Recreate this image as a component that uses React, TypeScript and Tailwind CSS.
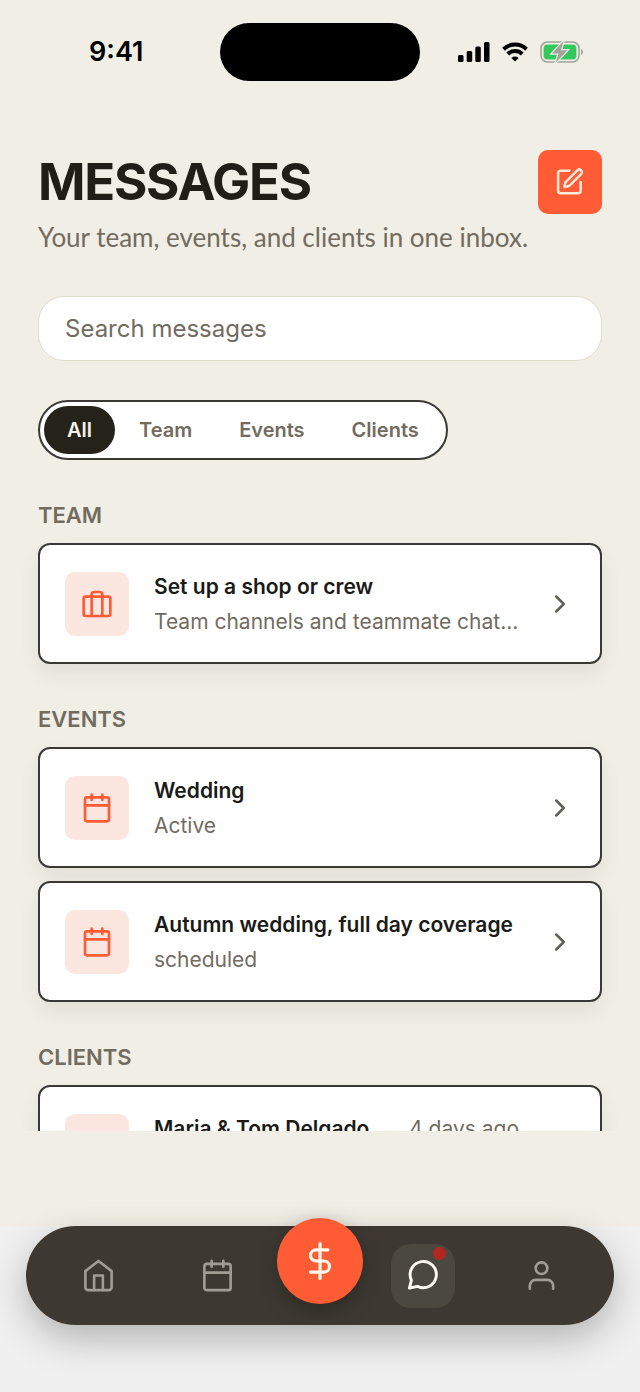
import type { ReactNode } from 'react'

type IconProps = { className?: string; children: ReactNode }

function Icon({ className, children }: IconProps) {
  return (
    <svg
      viewBox="0 0 24 24"
      fill="none"
      stroke="currentColor"
      strokeLinecap="round"
      strokeLinejoin="round"
      aria-hidden="true"
      className={className}
    >
      {children}
    </svg>
  )
}

function EditIcon() {
  return (
    <Icon className="size-[30px] stroke-2">
      <path d="M11.500 3H4.500a2 2 0 0 0-2 2v14a2 2 0 0 0 2 2h14a2 2 0 0 0 2-2v-7" />
      <path d="M17.875 2.625a1 1 0 0 1 3 3l-9.013 9.014a2 2 0 0 1-.853.505l-2.873.84a.5.5 0 0 1-.62-.62l.84-2.873a2 2 0 0 1 .506-.852z" />
    </Icon>
  )
}

function CalendarIcon({ className }: { className: string }) {
  return (
    <Icon className={className}>
      <rect x="3" y="4" width="18" height="18" rx="1.5" />
      <path d="M16 2v4M8 2v4M3 10h18" />
    </Icon>
  )
}

function BriefcaseIcon({ className }: { className: string }) {
  return (
    <Icon className={className}>
      <rect x="2" y="6.5" width="20" height="14.5" rx="1.5" />
      <path d="M16 21V5a2 2 0 0 0-2-2h-4a2 2 0 0 0-2 2v16" />
    </Icon>
  )
}

function UserIcon({ className }: { className: string }) {
  return (
    <Icon className={className}>
      <path d="M20 21v-2a4 4 0 0 0-4-4H8a4 4 0 0 0-4 4v2" />
      <circle cx="12" cy="7" r="4" />
    </Icon>
  )
}

function StatusBar() {
  return (
    <div className="grid h-[103px] shrink-0 grid-cols-[1fr_auto_1fr] items-center px-[38px]">
      <div className="pl-[51px] text-[27px] leading-8 font-semibold text-black">9:41</div>
      <div className="h-[58px] w-[200px] rounded-full bg-black" />
      <div className="flex items-center justify-end gap-3 pr-[18px]">
        <svg viewBox="0 0 32 20" className="h-5 w-8">
          <rect x="0" y="13" width="5.5" height="7" rx="1.5" />
          <rect x="8.7" y="9" width="5.5" height="11" rx="1.5" />
          <rect x="17.3" y="4.5" width="5.5" height="15.5" rx="1.5" />
          <rect x="26" y="0" width="5.5" height="20" rx="1.5" />
        </svg>
        <svg viewBox="0 0 26 20" className="h-5 w-[26px]" fill="none" stroke="black" strokeWidth="4">
          <path d="M1.5 7.2a16.5 16.5 0 0 1 23 0" />
          <path d="M5.8 12a10.4 10.4 0 0 1 14.4 0" />
          <path d="M13 19.6l-3.6-3.7a5.2 5.2 0 0 1 7.2 0z" fill="black" stroke="none" />
        </svg>
        <svg viewBox="0 0 44 24" className="h-6 w-11">
          <rect x="1" y="2" width="38" height="20" rx="6.5" fill="none" stroke="#a3a39b" strokeWidth="1.6" />
          <rect x="3.6" y="4.6" width="32.8" height="14.8" rx="4" fill="#34c759" />
          <path d="M41 9v6c1.2-.5 2-1.7 2-3s-.8-2.5-2-3z" fill="#a3a39b" />
          <path
            d="M23.5 1L12 13.5h6.5L15.5 23 27.5 10.3h-6.5z"
            fill="#a3a39b"
            stroke="#f1eee6"
            strokeWidth="2.4"
            paintOrder="stroke"
          />
        </svg>
      </div>
    </div>
  )
}

const tabs = ['All', 'Team', 'Events', 'Clients']

interface Thread {
  title: string
  detail: string
  time?: string
  icon: (props: { className: string }) => ReactNode
}

const sections: { name: string; threads: Thread[] }[] = [
  {
    name: 'Team',
    threads: [{ title: 'Set up a shop or crew', detail: 'Team channels and teammate chat...', icon: BriefcaseIcon }],
  },
  {
    name: 'Events',
    threads: [
      { title: 'Wedding', detail: 'Active', icon: CalendarIcon },
      { title: 'Autumn wedding, full day coverage', detail: 'scheduled', icon: CalendarIcon },
    ],
  },
  {
    name: 'Clients',
    threads: [{ title: 'Maria & Tom Delgado', detail: '', time: '4 days ago', icon: UserIcon }],
  },
]

function ThreadCard({ thread }: { thread: Thread }) {
  const ThreadIcon = thread.icon
  return (
    <a
      href="#"
      className="flex h-[121px] items-center rounded-xl border-2 border-[#3a3935] bg-white px-[25px] shadow-[0_10px_20px_rgba(40,36,20,0.07)]"
    >
      <span className="flex size-16 shrink-0 items-center justify-center rounded-[10px] bg-[#fce6e0] text-[#ff5c35]">
        <ThreadIcon className="size-8 stroke-2" />
      </span>
      <span className="ml-[25px] min-w-0 flex-1">
        <span className="flex justify-between text-[21px] leading-[35px]">
          <span className="truncate font-semibold text-[#1a1a17]">{thread.title}</span>
          {thread.time && <span className="pr-[26px] whitespace-nowrap text-[#716c5f]">{thread.time}</span>}
        </span>
        <span className="block min-h-[35px] truncate text-[21px] leading-[35px] text-[#716c5f]">{thread.detail}</span>
      </span>
      <Icon className="size-[30px] shrink-0 stroke-2 text-[#625f57]">
        <path d="M9 18l6-6-6-6" />
      </Icon>
    </a>
  )
}

function NavBar() {
  const item = 'flex size-16 items-center justify-center rounded-[20px]'
  return (
    <nav className="mx-[26px] flex h-[99px] items-center rounded-full bg-[#3d3932] px-[13px] text-[#a19d95] shadow-[0_14px_36px_rgba(0,0,0,0.25)]">
      <div className="flex flex-1 justify-around">
        <a href="#" aria-label="Home" className={item}>
          <Icon className="size-[35px] stroke-[1.8]">
            <path d="M3 9l9-7 9 7v11a2 2 0 0 1-2 2H5a2 2 0 0 1-2-2z" />
            <path d="M9 22V12h6v10" />
          </Icon>
        </a>
        <a href="#" aria-label="Calendar" className={item}>
          <CalendarIcon className="size-[35px] stroke-[1.8]" />
        </a>
      </div>
      <button
        aria-label="New payment"
        className="mb-[29px] flex size-[86px] shrink-0 items-center justify-center rounded-full bg-[#ff5c35] text-[#fffaf0] shadow-[0_6px_20px_rgba(0,0,0,0.3)]"
      >
        <Icon className="size-[38px] stroke-2">
          <path d="M12 1v22M17 5H9.5a3.5 3.5 0 0 0 0 7h5a3.5 3.5 0 0 1 0 7H6" />
        </Icon>
      </button>
      <div className="flex flex-1 justify-around">
        <a href="#" aria-label="Messages" className={`${item} relative bg-[#4b4840] text-[#fffaf0]`}>
          <Icon className="size-[35px] stroke-2">
            <path d="M8.6 19.5A9 9 0 1 0 4.4 15.3L3 20.6Z" />
          </Icon>
          <span className="absolute top-[3px] right-[9px] size-[13px] rounded-full bg-[#b32720]" />
        </a>
        <a href="#" aria-label="Profile" className={item}>
          <UserIcon className="size-[35px] stroke-[1.8]" />
        </a>
      </div>
    </nav>
  )
}

export default function App() {
  return (
    <div className="flex h-screen flex-col bg-[#f1eee6] font-['Inter',sans-serif]">
      <StatusBar />
      <main className="min-h-0 flex-1 overflow-hidden px-[38px] pt-[47px]">
        <header className="flex items-start justify-between">
          <div>
            <h1 className="text-[51px] leading-[64px] font-bold tracking-tight text-[#211e17]">MESSAGES</h1>
            <p className="mt-1.5 font-['Lato',sans-serif] text-[26px] leading-[34px] whitespace-nowrap text-[#716c5f]">
              Your team, events, and clients in one inbox.
            </p>
          </div>
          <button
            aria-label="New message"
            className="flex size-16 shrink-0 items-center justify-center rounded-[10px] bg-[#ff5c35] text-[#fbe9da]"
          >
            <EditIcon />
          </button>
        </header>

        <input
          type="search"
          aria-label="Search messages"
          placeholder="Search messages"
          className="mt-[42px] block h-[65px] w-full rounded-[26px] border border-[#e0dccd] bg-white px-[26px] text-[24px] text-[#211e17] placeholder:text-[#716c5f]"
        />

        <div className="mt-[39px] flex h-[60px] w-fit items-center gap-px rounded-full border-2 border-[#3a3935] bg-white px-1 text-[20px] font-semibold text-[#716c5f]">
          {tabs.map(tab => (
            <button
              key={tab}
              aria-pressed={tab === 'All'}
              className="h-12 rounded-3xl px-[23px] aria-pressed:bg-[#25221a] aria-pressed:text-[#f6f2e8]"
            >
              {tab}
            </button>
          ))}
        </div>

        {sections.map(section => (
          <section key={section.name} className="mt-[39px]">
            <h2 className="text-[22px] leading-8 font-semibold text-[#716c5f] uppercase">{section.name}</h2>
            <div className="mt-3 flex flex-col gap-[13px]">
              {section.threads.map(thread => (
                <ThreadCard key={thread.title} thread={thread} />
              ))}
            </div>
          </section>
        ))}
      </main>
      <footer className="shrink-0 bg-[#f0f0f0]">
        <div className="h-[95px] bg-[#f1eee6]" />
        <div className="relative pb-[67px]">
          <NavBar />
        </div>
      </footer>
    </div>
  )
}
